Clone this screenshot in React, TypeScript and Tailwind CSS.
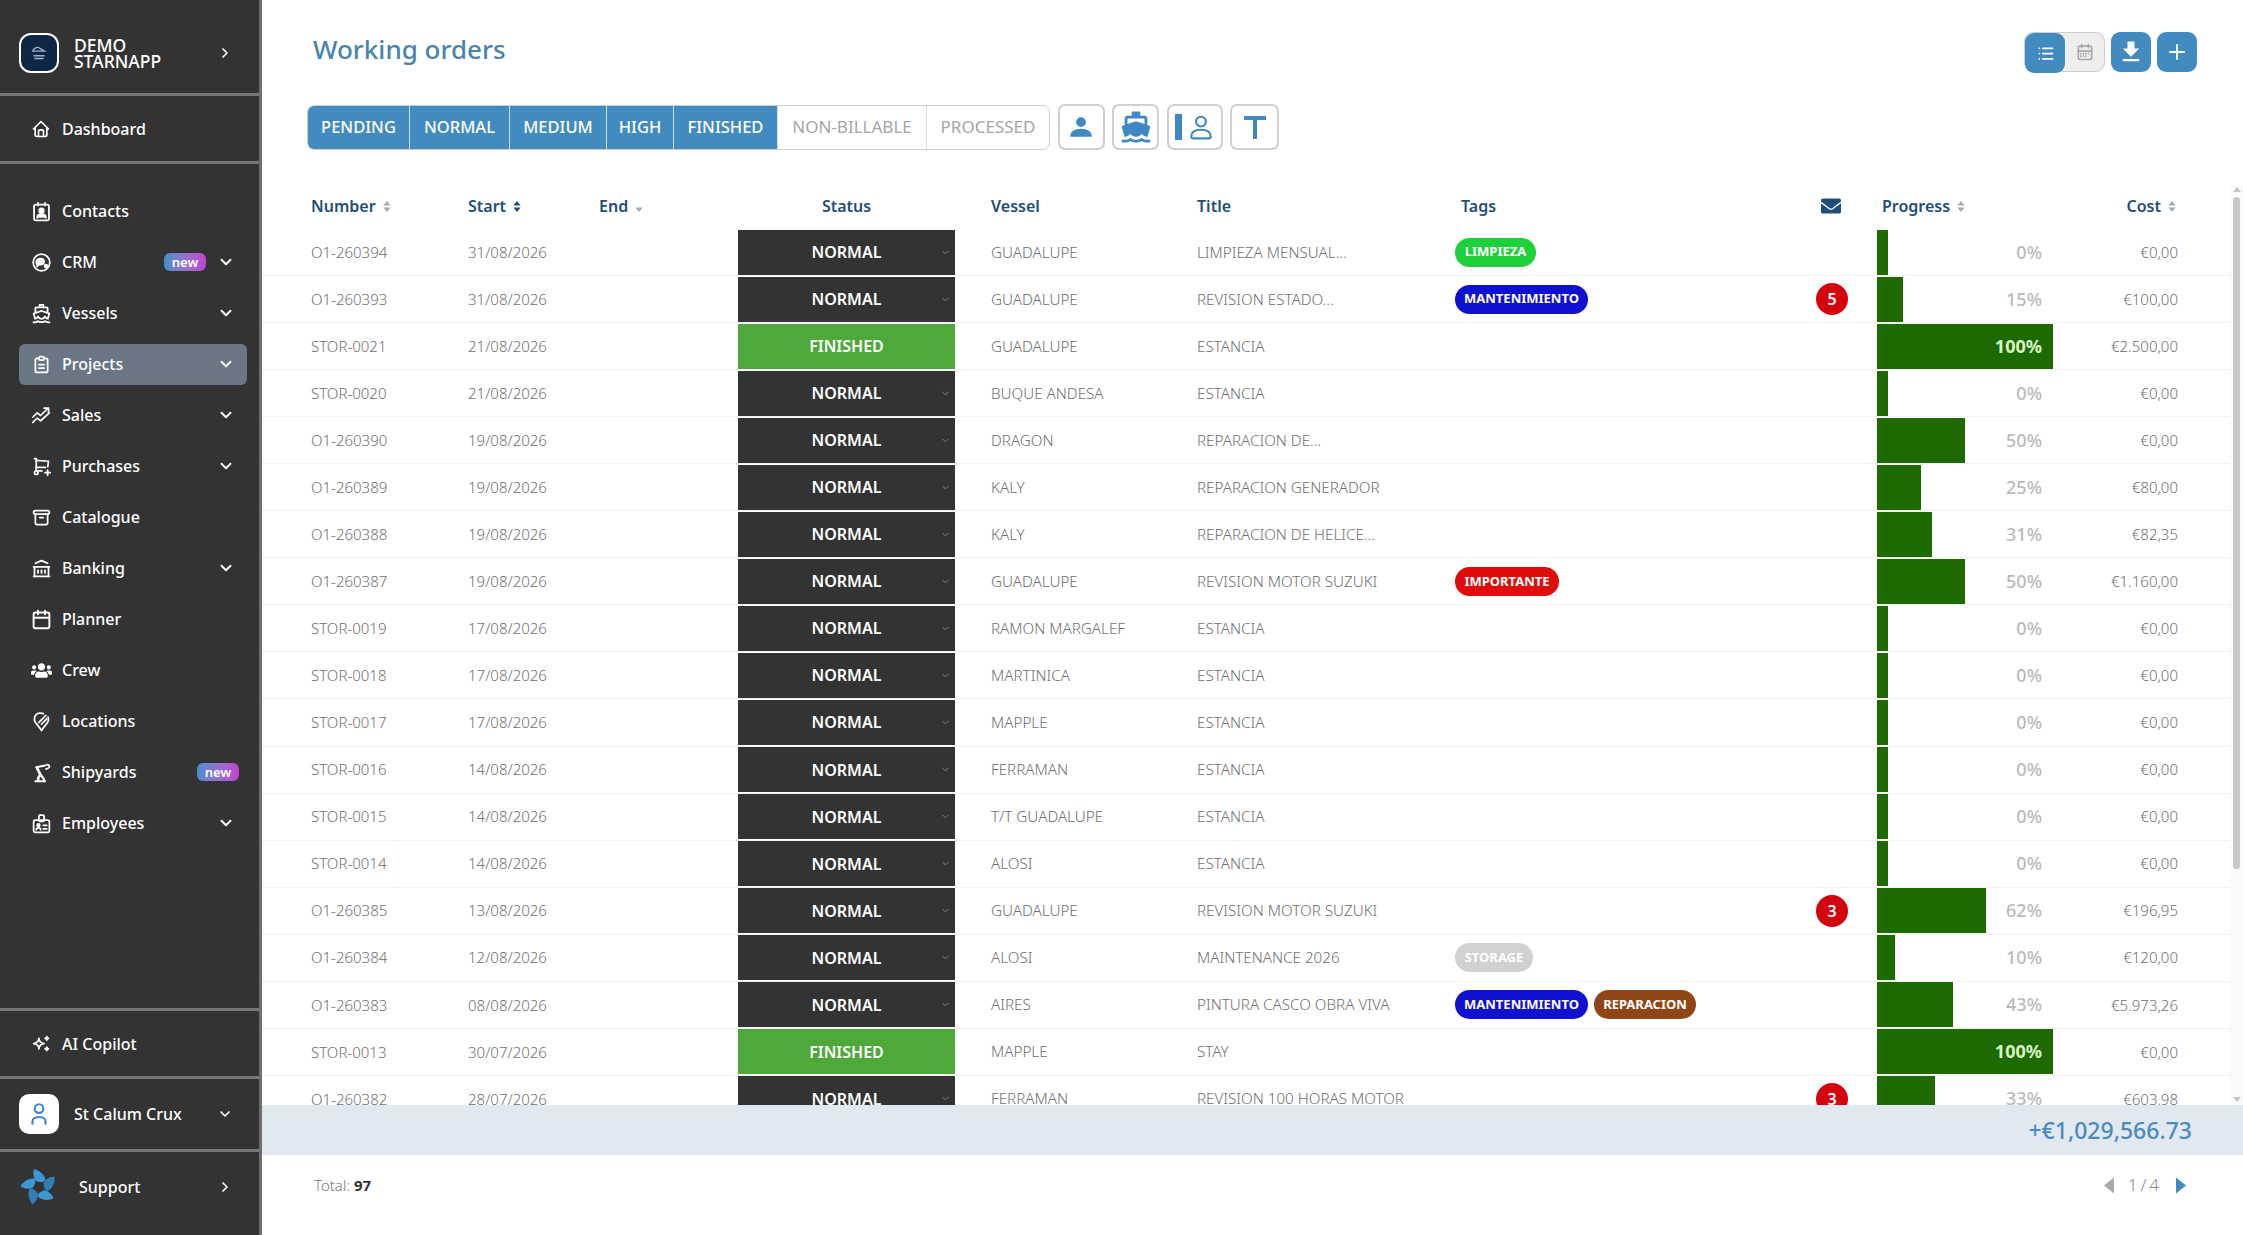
import React from "react";
import { ChevronDown, ChevronRight, Plus, Calendar } from "lucide-react";
import {
  TbHome, TbClipboardText, TbShoppingCartPlus,
  TbArchive, TbBuildingBank, TbSparkles, TbUser, TbList, TbCalendarMonth,
} from "react-icons/tb";
import { FaUsers, FaEnvelope } from "react-icons/fa";
import { MdDirectionsBoat, MdFileDownload, MdOutlineDirectionsBoat } from "react-icons/md";

const font = "font-['Noto_Sans','Open_Sans',sans-serif]";

type IconT = React.ComponentType<{ className?: string }>;
type Nav = { label: string; icon: IconT; chevron?: boolean; badge?: boolean; active?: boolean };

function Ic({ className, children }: { className?: string; children: React.ReactNode }) {
  return (
    <svg viewBox="0 0 24 24" fill="none" stroke="currentColor" strokeWidth="2" strokeLinecap="round" strokeLinejoin="round" className={className}>
      {children}
    </svg>
  );
}

const ContactIcon: IconT = ({ className }) => (
  <Ic className={className}>
    <rect x="3.5" y="4" width="17" height="18" rx="2" />
    <path d="M8 2v3M16 2v3" />
    <circle cx="12" cy="11" r="2.6" fill="currentColor" />
    <path d="M7 19c0-3 2.5-4 5-4s5 1 5 4" fill="currentColor" />
  </Ic>
);
const CrmIcon: IconT = ({ className }) => (
  <Ic className={className}>
    <circle cx="12" cy="12" r="9.5" />
    <path d="M6 11.5c0-2.5 2.5-4 5-4s4 1.500 4 3.500-2 3.500-4 3.500H9l-2 2v-2.500c-.7-.5-1-1.500-1-2.500z" fill="currentColor" />
    <circle cx="17" cy="16" r="1.500" fill="currentColor" />
  </Ic>
);
const SalesIcon: IconT = ({ className }) => (
  <Ic className={className}>
    <path d="M2 14l5-5 4 3 8-8" />
    <path d="M15 3.500h5v5" />
    <path d="M2 20l5-5 4 3 10-9" />
  </Ic>
);
const LocationIcon: IconT = ({ className }) => (
  <Ic className={className}>
    <path d="M12 22 5 13c-2-3-1-7 1-9 2-2 6-2 8-1" />
    <path d="M12 22l7-9c1-2 1.500-4 .5-6" />
    <path d="M9 13 17 5M12 15l6-6" />
  </Ic>
);
const CraneIcon: IconT = ({ className }) => (
  <Ic className={className}>
    <path d="M5 22h11" strokeWidth="2.500" />
    <path d="M8 21c0-3 1-5 3-6l-4-8" strokeWidth="3" />
    <path d="M6 6l10-2" strokeWidth="2.500" />
    <path d="M18 3c2 0 3 1 3 2M17 8c2 0 3-1 4-2" />
    <path d="M10 13l5 7" strokeWidth="2.500" />
  </Ic>
);
const BadgeIcon: IconT = ({ className }) => (
  <Ic className={className}>
    <rect x="3" y="8" width="18" height="14" rx="2" />
    <rect x="9" y="2.500" width="6" height="7" rx="1.500" />
    <circle cx="8.500" cy="14" r="1.500" fill="currentColor" />
    <path d="M6 19c0-1 1-2 2.500-2s2.500 1 2.500 2M14 14h4M14 18h4" />
  </Ic>
);
const PlannerIcon: IconT = ({ className }) => <Calendar className={className} strokeWidth={2.2} />;

const nav: Nav[] = [
  { label: "Contacts", icon: ContactIcon },
  { label: "CRM", icon: CrmIcon, chevron: true, badge: true },
  { label: "Vessels", icon: MdOutlineDirectionsBoat, chevron: true },
  { label: "Projects", icon: TbClipboardText, chevron: true, active: true },
  { label: "Sales", icon: SalesIcon, chevron: true },
  { label: "Purchases", icon: TbShoppingCartPlus, chevron: true },
  { label: "Catalogue", icon: TbArchive },
  { label: "Banking", icon: TbBuildingBank, chevron: true },
  { label: "Planner", icon: PlannerIcon },
  { label: "Crew", icon: FaUsers },
  { label: "Locations", icon: LocationIcon },
  { label: "Shipyards", icon: CraneIcon, badge: true },
  { label: "Employees", icon: BadgeIcon, chevron: true },
];

function NewBadge() {
  return (
    <span className="flex h-[18px] w-[42px] items-center justify-center rounded-[6px] bg-gradient-to-r from-[#3f8fce] to-[#c13fd0] text-[13px] font-semibold leading-none text-white">
      new
    </span>
  );
}

function NavRow({ item }: { item: Nav }) {
  const Icon = item.icon;
  return (
    <div className={`flex h-[41px] items-center rounded-md pl-[12px] pr-[12px] ${item.active ? "bg-[#6a7683]" : ""}`}>
      <Icon className="h-[21px] w-[21px] shrink-0 text-white" />
      <span className="ml-[10px] flex-1 text-[16px] font-medium text-white">{item.label}</span>
      {item.badge && <span className={item.chevron ? "mr-[11px]" : "-mr-[4px]"}><NewBadge /></span>}
      {item.chevron && <ChevronDown className="h-[18px] w-[18px] text-white" strokeWidth={2.5} />}
    </div>
  );
}

const blades = [0, 72, 144, 216, 288];

function Sidebar() {
  return (
    <aside className="flex h-full w-[262px] shrink-0 flex-col border-r-[3px] border-[#6e6e6e] bg-[#333333]">
      <div className="flex h-[96px] items-center border-b-[3px] border-[#777777] pl-[19px] pr-[26px] pt-[12px]">
        <div className="flex h-[40px] w-[40px] items-center justify-center rounded-[12px] border-[2px] border-white bg-[#0f2747]">
          <svg viewBox="0 0 24 24" className="h-[22px] w-[22px]" fill="none" stroke="#9fb2c8" strokeWidth="1.4">
            <path d="M5 10c2-4 6-5 8-3l5 3H5z" />
            <path d="M6 15h12M7 18h10" />
          </svg>
        </div>
        <div className="ml-[15px] flex-1 text-[17.500px] font-medium leading-[16px] text-white">
          <div>DEMO</div>
          <div>STARNAPP</div>
        </div>
        <ChevronRight className="h-[16px] w-[16px] text-white" strokeWidth={2.5} />
      </div>
      <div className="flex h-[68px] items-center border-b-[3px] border-[#777777] px-[19px]">
        <div className="flex items-center pl-[12px]">
          <TbHome className="h-[20px] w-[20px] text-white" />
          <span className="ml-[11px] text-[16px] font-medium text-white">Dashboard</span>
        </div>
      </div>
      <nav className="flex flex-1 flex-col gap-[10px] pl-[19px] pr-[12px] pt-[26.5px]">
        {nav.map((n) => (
          <NavRow key={n.label} item={n} />
        ))}
      </nav>
      <div className="flex h-[71px] items-center border-y-[3px] border-[#777777] pl-[31px]">
        <TbSparkles className="h-[21px] w-[21px] text-white" />
        <span className="ml-[10px] text-[16px] font-medium text-white">AI Copilot</span>
      </div>
      <div className="flex h-[73px] items-center border-b-[3px] border-[#777777] pl-[19px] pr-[26px]">
        <div className="flex h-[40px] w-[40px] items-center justify-center rounded-[10px] bg-white">
          <TbUser className="h-[26px] w-[26px] text-[#3f88c5]" />
        </div>
        <span className="ml-[15px] flex-1 text-[16px] font-medium text-white">St Calum Crux</span>
        <ChevronDown className="h-[16px] w-[16px] text-white" strokeWidth={2.5} />
      </div>
      <div className="flex h-[83px] items-center pb-[14px] pl-[20px] pr-[26px]">
        <svg viewBox="0 0 40 40" className="h-[38px] w-[38px]">
          {blades.map((a) => (
            <path key={a} transform={`rotate(${a} 20 20)`} d="M17 14 C14 9 13 5 15 1 C21 3 26 7 27 13 L23 15 Z" fill={a % 144 === 0 ? "#3d97d3" : "#2f7fb5"} />
          ))}
        </svg>
        <span className="ml-[21px] flex-1 text-[16px] font-medium text-white">Support</span>
        <ChevronRight className="h-[16px] w-[16px] text-white" strokeWidth={2.5} />
      </div>
    </aside>
  );
}

type Tag = "LIMPIEZA" | "MANTENIMIENTO" | "IMPORTANTE" | "STORAGE" | "REPARACION";
const tagStyle: Record<Tag, string> = {
  LIMPIEZA: "bg-[#1ed13a] w-[81px]",
  MANTENIMIENTO: "bg-[#1010d0] w-[133px]",
  IMPORTANTE: "bg-[#e00b0b] w-[104px]",
  STORAGE: "bg-[#d3d0d0] w-[78px]",
  REPARACION: "bg-[#8f4516] w-[102px]",
};

type Row = { n: string; d: string; fin?: boolean; v: string; t: string; tags?: Tag[]; m?: number; p: number; c: string };

const rows: Row[] = [
  { n: "O1-260394", d: "31/08/2026", v: "GUADALUPE", t: "LIMPIEZA MENSUAL...", tags: ["LIMPIEZA"], p: 0, c: "€0,00" },
  { n: "O1-260393", d: "31/08/2026", v: "GUADALUPE", t: "REVISION ESTADO...", tags: ["MANTENIMIENTO"], m: 5, p: 15, c: "€100,00" },
  { n: "STOR-0021", d: "21/08/2026", fin: true, v: "GUADALUPE", t: "ESTANCIA", p: 100, c: "€2.500,00" },
  { n: "STOR-0020", d: "21/08/2026", v: "BUQUE ANDESA", t: "ESTANCIA", p: 0, c: "€0,00" },
  { n: "O1-260390", d: "19/08/2026", v: "DRAGON", t: "REPARACION DE...", p: 50, c: "€0,00" },
  { n: "O1-260389", d: "19/08/2026", v: "KALY", t: "REPARACION GENERADOR", p: 25, c: "€80,00" },
  { n: "O1-260388", d: "19/08/2026", v: "KALY", t: "REPARACION DE HELICE...", p: 31, c: "€82,35" },
  { n: "O1-260387", d: "19/08/2026", v: "GUADALUPE", t: "REVISION MOTOR SUZUKI", tags: ["IMPORTANTE"], p: 50, c: "€1.160,00" },
  { n: "STOR-0019", d: "17/08/2026", v: "RAMON MARGALEF", t: "ESTANCIA", p: 0, c: "€0,00" },
  { n: "STOR-0018", d: "17/08/2026", v: "MARTINICA", t: "ESTANCIA", p: 0, c: "€0,00" },
  { n: "STOR-0017", d: "17/08/2026", v: "MAPPLE", t: "ESTANCIA", p: 0, c: "€0,00" },
  { n: "STOR-0016", d: "14/08/2026", v: "FERRAMAN", t: "ESTANCIA", p: 0, c: "€0,00" },
  { n: "STOR-0015", d: "14/08/2026", v: "T/T GUADALUPE", t: "ESTANCIA", p: 0, c: "€0,00" },
  { n: "STOR-0014", d: "14/08/2026", v: "ALOSI", t: "ESTANCIA", p: 0, c: "€0,00" },
  { n: "O1-260385", d: "13/08/2026", v: "GUADALUPE", t: "REVISION MOTOR SUZUKI", m: 3, p: 62, c: "€196,95" },
  { n: "O1-260384", d: "12/08/2026", v: "ALOSI", t: "MAINTENANCE 2026", tags: ["STORAGE"], p: 10, c: "€120,00" },
  { n: "O1-260383", d: "08/08/2026", v: "AIRES", t: "PINTURA CASCO OBRA VIVA", tags: ["MANTENIMIENTO", "REPARACION"], p: 43, c: "€5.973,26" },
  { n: "STOR-0013", d: "30/07/2026", fin: true, v: "MAPPLE", t: "STAY", p: 100, c: "€0,00" },
  { n: "O1-260382", d: "28/07/2026", v: "FERRAMAN", t: "REVISION 100 HORAS MOTOR", m: 3, p: 33, c: "€603,98" },
];

function Sort({ only, dark }: { only?: boolean; dark?: boolean }) {
  return (
    <svg viewBox="0 0 8 12" className="ml-[7px] h-[11px] w-[8px]" fill={dark ? "#1f4e79" : "#a3abb3"}>
      {!only && <path d="M4 0 8 5H0z" />}
      <path d="M4 12 0 7h8z" />
    </svg>
  );
}

function TableHead() {
  return (
    <div className="flex h-[44px] items-center pb-[2px] pl-[49px] text-[16px] font-semibold text-[#1f4e79]">
      <div className="flex w-[157px] items-center">Number<Sort /></div>
      <div className="flex w-[131px] items-center">Start<Sort dark /></div>
      <div className="flex w-[139px] items-center">End<Sort only /></div>
      <div className="mr-[36px] w-[217px] text-center">Status</div>
      <div className="w-[206px]">Vessel</div>
      <div className="w-[258px]">Title</div>
      <div className="w-[355px] pl-[6px]">Tags</div>
      <div className="flex w-[44px] justify-center pr-[2px]"><FaEnvelope className="h-[20px] w-[22px] text-[#1f4e79]" /></div>
      <div className="w-[23px]" />
      <div className="flex w-[176px] items-center pl-[5px]">Progress<Sort /></div>
      <div className="flex w-[125px] items-center justify-end pr-[2px]">Cost<Sort /></div>
    </div>
  );
}

function TableRow({ r }: { r: Row }) {
  return (
    <div className="flex h-[47.05px] shrink-0 items-center border-b border-[#f1f1f1] pl-[49px] text-[15px] font-light text-[#6f6f6f]">
      <div className="w-[157px]">{r.n}</div>
      <div className="w-[131px]">{r.d}</div>
      <div className="w-[139px]" />
      <div className={`relative mr-[36px] flex h-[45px] w-[217px] items-center justify-center text-[16px] font-semibold text-white ${r.fin ? "bg-[#4fa93a]" : "bg-[#333333]"}`}>
        {r.fin ? "FINISHED" : "NORMAL"}
        <ChevronDown className="absolute right-[4px] top-[17px] h-[11px] w-[11px] text-[#8a8a8a]" />
      </div>
      <div className="w-[206px] text-[15.2px]">{r.v}</div>
      <div className="w-[258px] text-[15.2px]">{r.t}</div>
      <div className="flex w-[355px] gap-[6px]">
        {r.tags?.map((t) => (
          <span key={t} className={`flex h-[29px] items-center justify-center rounded-full text-[13px] font-bold text-white ${tagStyle[t]}`}>{t}</span>
        ))}
      </div>
      <div className="flex w-[44px] justify-center">
        {r.m && <span className="flex h-[32px] w-[32px] items-center justify-center rounded-full bg-[#d4040f] text-[16px] font-semibold text-white">{r.m}</span>}
      </div>
      <div className="w-[23px]" />
      <div className="relative h-[45px] w-[176px]">
        <div className="h-full bg-[#1d6a00]" style={{ width: Math.max(11, r.p * 1.76) }} />
        <span className={`absolute right-[11px] top-[10px] text-[18px] leading-[25px] ${r.p === 100 ? "font-bold text-[#d8f5c8]" : "font-medium text-[#bababa]"}`}>{r.p}%</span>
      </div>
      <div className="w-[125px] text-right">{r.c}</div>
    </div>
  );
}

function Scrollbar() {
  return (
    <div className="flex w-[13px] shrink-0 flex-col items-center bg-[#fafafa] pb-[3px] pt-[2px]">
      <svg viewBox="0 0 8 5" className="h-[5px] w-[8px]" fill="#c4c4c4"><path d="M4 0 8 5H0z" /></svg>
      <div className="mt-[5px] h-[672px] w-[7px] rounded-sm bg-[#c8c8c8]" />
      <div className="flex-1" />
      <svg viewBox="0 0 8 5" className="h-[5px] w-[8px]" fill="#c4c4c4"><path d="M4 5 0 0h8z" /></svg>
    </div>
  );
}

const seg = ["PENDING", "NORMAL", "MEDIUM", "HIGH", "FINISHED"];
const segW = ["w-[102px]", "w-[100px]", "w-[97px]", "w-[67px]", "w-[104px]"];

function IconBtn({ w, children }: { w: string; children: React.ReactNode }) {
  return <button className={`flex h-[46px] items-center justify-center rounded-[7px] border-[2px] border-[#cfcfcf] bg-white text-[#3f88c5] ${w}`}>{children}</button>;
}

export default function App() {
  return (
    <div className={`flex h-[1235px] w-[2243px] overflow-hidden bg-white ${font}`}>
      <Sidebar />
      <main className="flex min-w-0 flex-1 flex-col">
        <header className="flex items-start justify-between pl-[51px] pr-[46px] pt-[32px]">
          <h1 className="-mt-[1px] text-[26px] font-medium leading-[36px] text-[#4a84ad]">Working orders</h1>
          <div className="flex items-center gap-[6px]">
            <div className="flex h-[40px] w-[81px] rounded-[9px] border border-[#cfcfcf] bg-[#eeeeee]">
              <div className="flex h-[40px] w-[40px] items-center justify-center rounded-[9px] bg-[#428bc1]">
                <TbList className="h-[21px] w-[21px] text-white" />
              </div>
              <div className="flex flex-1 items-center justify-center">
                <TbCalendarMonth className="h-[20px] w-[20px] text-[#a8a8a8]" />
              </div>
            </div>
            <button className="flex h-[40px] w-[40px] items-center justify-center rounded-[9px] bg-[#428bc1]">
              <MdFileDownload className="h-[28px] w-[28px] text-white" />
            </button>
            <button className="flex h-[40px] w-[40px] items-center justify-center rounded-[9px] bg-[#428bc1]">
              <Plus className="h-[24px] w-[24px] text-white" />
            </button>
          </div>
        </header>
        <div className="mt-[-1px] flex items-center gap-[7.5px] pl-[45px] pt-[33px]">
          <div className="flex h-[45px] overflow-hidden rounded-[7px] border border-[#cfcfcf] text-[16.5px] font-medium">
            {seg.map((s, i) => (
              <div key={s} className={`flex items-center justify-center border-r border-[#cfdfec] bg-[#428bc1] text-white ${segW[i]}`}>{s}</div>
            ))}
            <div className="flex w-[149px] items-center justify-center border-r border-[#dddddd] text-[17px] font-normal text-[#a5a5a5]">NON-BILLABLE</div>
            <div className="flex w-[122px] items-center justify-center text-[17px] font-normal text-[#a5a5a5]">PROCESSED</div>
          </div>
          <IconBtn w="w-[47px]">
            <svg viewBox="0 0 24 24" className="h-[26px] w-[26px]" fill="currentColor">
              <circle cx="12" cy="7.500" r="4.500" />
              <path d="M2 21c0-5 4-7.500 10-7.500S22 16 22 21z" />
            </svg>
          </IconBtn>
          <IconBtn w="w-[47px]"><MdDirectionsBoat className="h-[34px] w-[34px]" /></IconBtn>
          <IconBtn w="w-[56px]">
            <span className="mr-[6px] h-[26px] w-[7px] bg-[#3f88c5]" />
            <svg viewBox="0 0 24 24" className="h-[28px] w-[26px]" fill="none" stroke="currentColor" strokeWidth="2">
              <circle cx="12" cy="7" r="4.500" />
              <path d="M3 21c0-5 4-6.500 9-6.500s9 1.500 9 6.500c0 1-1 1.500-2 1.500H5c-1 0-2-.5-2-1.500z" />
            </svg>
          </IconBtn>
          <IconBtn w="w-[49px]">
            <svg viewBox="0 0 24 24" className="h-[24px] w-[24px]" fill="none" stroke="currentColor" strokeWidth="4">
              <path d="M1 3h22M12 3v21" />
            </svg>
          </IconBtn>
        </div>
        <div className="mt-[35px] flex min-h-0 flex-1">
          <div className="flex min-w-0 flex-1 flex-col">
            <TableHead />
            <div className="flex min-h-0 flex-1 flex-col overflow-hidden">
              {rows.map((r) => (
                <TableRow key={r.n} r={r} />
              ))}
            </div>
          </div>
          <Scrollbar />
        </div>
        <div className="flex h-[50px] shrink-0 items-center justify-end bg-[#e1e8f0] pr-[51px] text-[23px] font-medium text-[#4a8bbd]">
          +€1,029,566.73
        </div>
        <footer className="flex h-[80px] shrink-0 items-center justify-between pb-[20px] pl-[52px] pr-[57px]">
          <span className="text-[15px] font-light text-[#777777]">Total: <b className="font-bold text-[#333333]">97</b></span>
          <div className="flex items-center">
            <svg viewBox="0 0 10 16" className="h-[17px] w-[10px]" fill="#a9a9a9"><path d="M10 0v16L0 8z" /></svg>
            <span className="mx-[14px] text-[17px] font-light tracking-[3px] text-[#888888]">1/4</span>
            <svg viewBox="0 0 10 16" className="h-[17px] w-[10px]" fill="#428bc1"><path d="M0 0v16l10-8z" /></svg>
          </div>
        </footer>
      </main>
    </div>
  );
}
